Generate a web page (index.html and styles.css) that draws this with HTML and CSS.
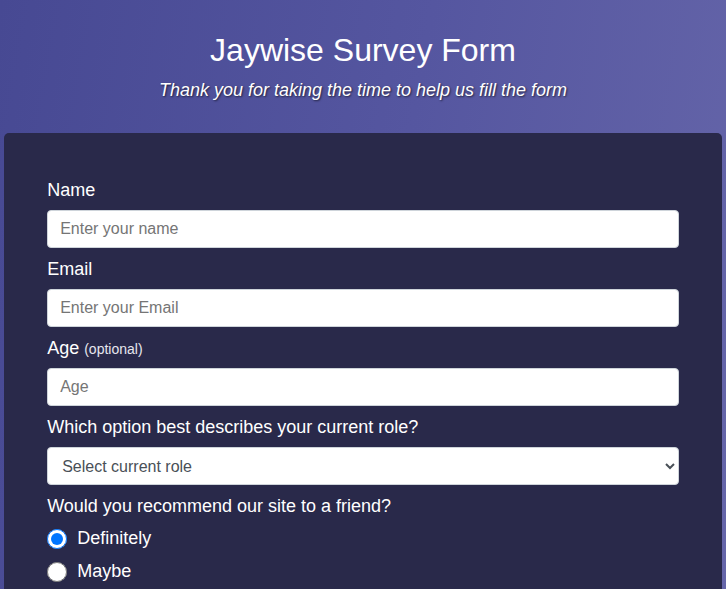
FILE: index.html
```html
<!DOCTYPE html>
<html lang="en">
<head>
<meta charset="utf-8">
<title>Jaywise Survey Form</title>
<link rel="stylesheet" href="styles.css">
</head>
<body>
<header class="header">
  <h1 class="title">Jaywise Survey Form</h1>
  <p class="subtitle">Thank you for taking the time to help us fill the form</p>
</header>
<main class="card">
  <form class="form">
    <label class="label" for="name">Name</label>
    <input class="control" id="name" type="text" placeholder="Enter your name">

    <label class="label" for="email">Email</label>
    <input class="control" id="email" type="email" placeholder="Enter your Email">

    <label class="label" for="age">Age <span class="hint">(optional)</span></label>
    <input class="control" id="age" type="number" placeholder="Age">

    <label class="label" for="role">Which option best describes your current role?</label>
    <select class="control select" id="role">
      <option>Select current role</option>
      <option>Student</option>
      <option>Full Time Job</option>
      <option>Full Time Learner</option>
      <option>Prefer not to say</option>
      <option>Other</option>
    </select>

    <p class="label label-group">Would you recommend our site to a friend?</p>
    <label class="radio-row"><input class="radio" type="radio" name="rec" checked> Definitely</label>
    <label class="radio-row"><input class="radio" type="radio" name="rec"> Maybe</label>
    <label class="radio-row"><input class="radio" type="radio" name="rec"> Not sure</label>

    <label class="label" for="comments">Any comments or suggestions?</label>
    <textarea class="control area" id="comments" placeholder="Enter your comment here..."></textarea>
  </form>
</main>
</body>
</html>
```
FILE: styles.css
```css
* { box-sizing: border-box; }

html, body {
  margin: 0;
  padding: 0;
}

body {
  font-family: "Liberation Sans", Arial, sans-serif;
  color: #fff;
  background: linear-gradient(100deg, #474993 0%, #5556a0 50%, #6767aa 100%);
  min-height: 100vh;
}

.header {
  text-align: center;
  padding-top: 32px;
  padding-bottom: 32px;
}

.title {
  margin: 0;
  font-size: 32px;
  font-weight: 400;
  line-height: normal;
}

.subtitle {
  margin: 11px 0 0;
  font-size: 18px;
  font-style: italic;
  line-height: normal;
  text-shadow: 1px 1px 2px rgba(0, 0, 0, 0.6);
}

.card {
  width: 99%;
  margin: 0 auto;
  background: #29294a;
  border-radius: 5px;
  padding: 45px 6% 40px;
}

.form {
  display: flex;
  flex-direction: column;
}

.label {
  display: block;
  height: 23px;
  padding-top: 2px;
  margin: 0 0 9px;
  font-size: 18px;
  line-height: 21px;
}

.hint {
  font-size: 14px;
  line-height: 1;
  color: #e6e6ee;
}

.control {
  display: block;
  width: 100%;
  height: 38px;
  margin: 0 0 9px;
  padding: 6px 12px;
  font-family: "Liberation Sans", Arial, sans-serif;
  font-size: 16px;
  line-height: 24px;
  color: #495057;
  background: #fff;
  border: 1px solid #ced4da;
  border-radius: 4px;
}

.control::placeholder {
  color: #757575;
}

.select {
  padding: 6px 10px;
}

.area {
  height: 100px;
}

.label-group {
  margin-bottom: 5px;
}

.radio-row {
  display: flex;
  align-items: center;
  gap: 10px;
  height: 33px;
  font-size: 18px;
}

.radio {
  width: 20px;
  height: 20px;
  margin: 0;
}

.radio-row:last-of-type {
  margin-bottom: 12px;
}
```
